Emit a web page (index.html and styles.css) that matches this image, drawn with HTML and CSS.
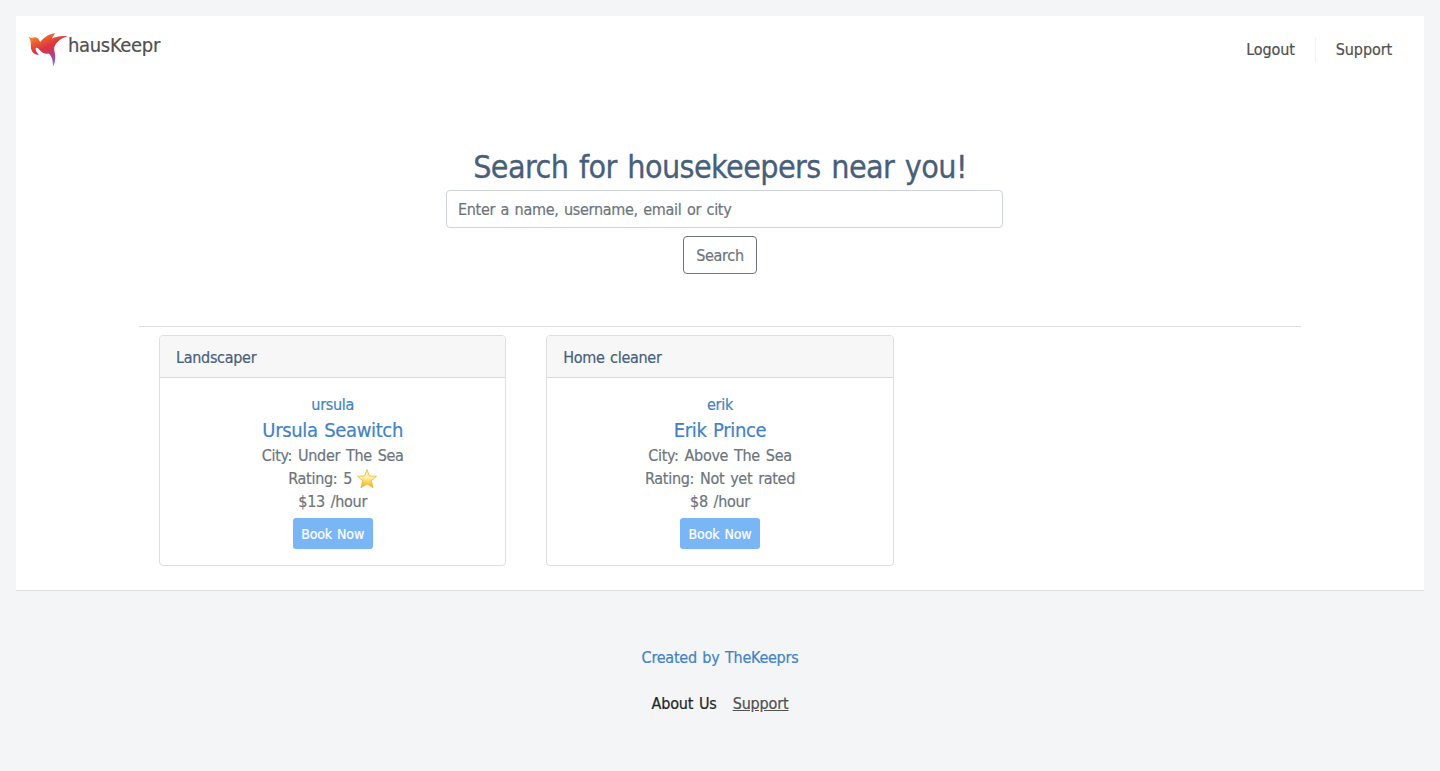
FILE: index.html
```html
<!DOCTYPE html>
<html lang="en">
<head>
<meta charset="utf-8">
<title>hausKeepr</title>
<link rel="stylesheet" href="styles.css">
</head>
<body>
<main class="page">
  <nav class="navbar">
    <a class="brand">
      <svg class="logo" viewBox="0 0 40 36" width="40" height="36" aria-hidden="true">
        <defs>
          <linearGradient id="bird" gradientUnits="userSpaceOnUse" x1="8" y1="2" x2="23" y2="35">
            <stop offset="0" stop-color="#f4932f"/>
            <stop offset="0.22" stop-color="#ea5c33"/>
            <stop offset="0.45" stop-color="#dc3340"/>
            <stop offset="0.62" stop-color="#c63a66"/>
            <stop offset="0.78" stop-color="#9a4d9f"/>
            <stop offset="1" stop-color="#8f7fd0"/>
          </linearGradient>
        </defs>
        <path fill="url(#bird)" d="M0.300 4.800 L3.500 6 C5.500 5 9 5 10.500 7 C11.200 8 11.500 9.500 12.600 9.800 C15 6.500 19 2.500 27.500 1 C26 2.500 24.500 4.500 24 6.500 C28 4.600 33 3.600 39.500 4.300 C33 6 28.500 10 26.500 14.500 C25.600 17 27 20.500 27.300 24 C27.500 28 26.800 31.500 25 34.500 C25 28 23.500 23.500 20.500 21.500 C17.500 22.300 14.500 21 12.500 18.800 C11 17 9.500 15.300 8 15.800 C6.800 17.500 8.500 20.500 11 22.600 C6.500 23.200 3.300 20 2.900 15.500 C2.700 11.500 3.500 9 0.300 4.800 Z"/>
      </svg>
      <span class="brand-name">hausKeepr</span>
    </a>
    <div class="nav-links">
      <a class="nav-link">Logout</a>
      <a class="nav-link nav-link-last">Support</a>
    </div>
  </nav>

  <section class="search">
    <h1 class="search-title">Search for housekeepers near you!</h1>
    <input class="search-input" type="text" placeholder="Enter a name, username, email or city">
    <button class="search-button">Search</button>
  </section>

  <section class="results">
    <article class="card">
      <header class="card-header">Landscaper</header>
      <div class="card-body">
        <a class="username">ursula</a>
        <a class="fullname">Ursula Seawitch</a>
        <p class="detail">City: Under The Sea</p>
        <p class="detail rating">Rating: 5
          <svg class="star" viewBox="0 0 20 20" width="20" height="20" aria-hidden="true">
            <defs>
              <linearGradient id="gold" x1="0" y1="0" x2="0" y2="1">
                <stop offset="0" stop-color="#fdeea0"/>
                <stop offset="0.4" stop-color="#fff5b9"/>
                <stop offset="0.7" stop-color="#fcd04e"/>
                <stop offset="1" stop-color="#f0a928"/>
              </linearGradient>
            </defs>
            <path fill="url(#gold)" stroke="#eeb339" stroke-width="0.8" stroke-linejoin="round" d="M10 0.600 L12.400 7 L19.500 7.300 L14.200 11.800 L16.200 18.800 L10 15 L3.800 18.800 L5.800 11.800 L0.500 7.300 L7.600 7 Z"/>
          </svg>
        </p>
        <p class="detail">$13 /hour</p>
        <button class="book">Book Now</button>
      </div>
    </article>
    <article class="card">
      <header class="card-header">Home cleaner</header>
      <div class="card-body">
        <a class="username">erik</a>
        <a class="fullname">Erik Prince</a>
        <p class="detail">City: Above The Sea</p>
        <p class="detail">Rating: Not yet rated</p>
        <p class="detail">$8 /hour</p>
        <button class="book">Book Now</button>
      </div>
    </article>
  </section>
</main>

<footer class="footer">
  <a class="credit">Created by TheKeeprs</a>
  <div class="footer-links">
    <span>About Us</span>
    <a class="footer-support">Support</a>
  </div>
</footer>
</body>
</html>
```
FILE: styles.css
```css
* {
  box-sizing: border-box;
}

body {
  margin: 0;
  padding: 16px;
  min-height: 771px;
  background: #f4f5f7;
  color: #212529;
  font-family: Tahoma, "DejaVu Sans Condensed", "DejaVu Sans", sans-serif;
  font-stretch: condensed;
  font-size: 16px;
  line-height: 23px;
  letter-spacing: -0.3px;
  word-spacing: 1.2px;
  -webkit-text-stroke: 0.2px;
}

input,
button {
  font: inherit;
  letter-spacing: inherit;
  word-spacing: inherit;
}

.page {
  height: 575px;
  background: #fff;
  border-bottom: 1px solid #dee0e2;
}

.navbar {
  display: flex;
  justify-content: space-between;
  height: 66px;
  padding: 0 12px;
  color: #505050;
}

.brand {
  display: flex;
  padding-top: 16px;
}

.brand-name {
  font-size: 20px;
  line-height: 27px;
  letter-spacing: -0.33px;
}

.nav-links {
  display: flex;
  padding-top: 21px;
  letter-spacing: -0.1px;
}

.nav-link {
  height: 25px;
  padding: 0 20px;
  line-height: 25px;
}

.nav-link-last {
  border-left: 1px solid #f2f3f5;
}

.search {
  display: flex;
  flex-direction: column;
  align-items: center;
  height: 244px;
  padding-top: 66px;
}

.search-title {
  margin: 0;
  color: #475f7b;
  font-size: 32px;
  font-weight: 400;
  line-height: 38px;
  letter-spacing: -0.6px;
  word-spacing: 2px;
  -webkit-text-stroke: 0.3px;
}

.search-input {
  width: 557px;
  height: 38px;
  margin: 4px 0 8px 9px;
  padding: 0 12px 0 11px;
  border: 1px solid #ced4da;
  border-radius: 4px;
}

.search-input::placeholder {
  color: #6c757d;
  opacity: 1;
}

.search-button {
  width: 74px;
  height: 38px;
  padding: 0;
  border: 1px solid #6c757d;
  border-radius: 4px;
  background: #fff;
  color: #6c757d;
}

.results {
  display: grid;
  grid-template-columns: repeat(3, 1fr);
  gap: 40px;
  width: 1162px;
  margin: 0 auto;
  padding: 8px 20px 0;
  border-top: 1px solid #dfdfdf;
}

.card {
  height: 231px;
  border: 1px solid #dfdfdf;
  border-radius: 4px;
  overflow: hidden;
}

.card-header {
  height: 42px;
  padding: 10px 16px;
  border-bottom: 1px solid #dadada;
  background: #f7f7f7;
  color: #475f7b;
}

.card-body {
  display: flex;
  flex-direction: column;
  align-items: center;
  padding-top: 15px;
  color: #6c757d;
}

.username,
.fullname,
.credit {
  color: #4183c4;
}

.fullname {
  font-size: 20px;
  line-height: 28px;
  letter-spacing: -0.35px;
}

.detail {
  margin: 0;
  word-spacing: 1.6px;
}

.rating {
  display: flex;
  align-items: center;
  gap: 5px;
}

.book {
  width: 80px;
  height: 31px;
  margin-top: 5px;
  padding: 1px 0 0;
  border: 0;
  border-radius: 3px;
  background: #7ab5f5;
  color: #fff;
  font-size: 14px;
  letter-spacing: -0.15px;
}

.footer {
  display: flex;
  flex-direction: column;
  align-items: center;
  gap: 23px;
  padding-top: 55px;
  letter-spacing: -0.25px;
}

.footer-links {
  display: flex;
  gap: 16px;
  letter-spacing: -0.15px;
}

.footer-support {
  color: #505050;
  text-decoration: underline;
}
```
